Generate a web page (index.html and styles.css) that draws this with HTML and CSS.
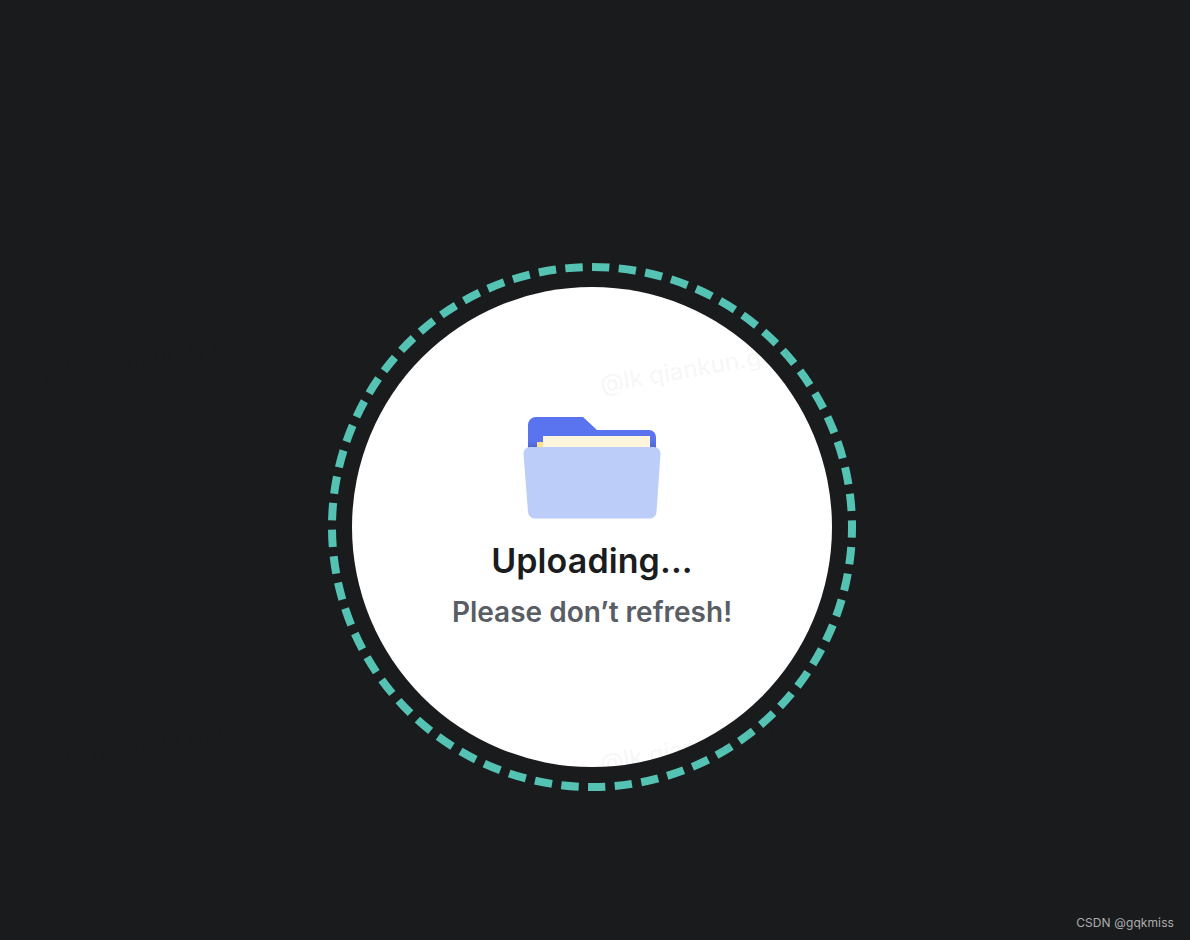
FILE: index.html
```html
<!DOCTYPE html>
<html lang="en">
<head>
<meta charset="utf-8">
<title>Uploading</title>
<link rel="stylesheet" href="styles.css">
</head>
<body>
<main class="stage">
  <div class="loader">
    <svg class="ring" viewBox="0 0 528 528" aria-hidden="true">
      <circle class="ring-track" cx="264" cy="264" r="260" pathLength="61"></circle>
    </svg>
    <div class="disc">
      <svg class="folder" viewBox="0 0 140 104" width="140" height="104" aria-hidden="true">
        <defs>
          <linearGradient id="backShade" x1="0" y1="0" x2="0" y2="1">
            <stop offset="0.72" stop-color="#5a74ef"></stop>
            <stop offset="1" stop-color="#4a5fc4"></stop>
          </linearGradient>
        </defs>
        <path fill="url(#backShade)" d="M6 9a8 8 0 0 1 8-8h47l14 13h52a7 7 0 0 1 7 7v13H6z"></path>
        <rect x="15" y="26" width="20" height="12" fill="#fbe28f"></rect>
        <rect x="21" y="20" width="107" height="14" fill="#fdf6dc"></rect>
        <path fill="#bccdfa" d="M8 31h124a6.500 6.500 0 0 1 6.500 7l-4 58a7 7 0 0 1-7 6.500H13a7 7 0 0 1-7-6.500L1.500 38A6.500 6.500 0 0 1 8 31z"></path>
      </svg>
      <h1 class="title">Uploading...</h1>
      <p class="subtitle">Please don’t refresh!</p>
    </div>
  </div>
  <div class="marks" aria-hidden="true">
    <span class="mark mark-a">@lk qiankun.guo</span>
    <span class="mark mark-b">@lk qiankun.guo</span>
    <span class="mark mark-c">@lk qiankun.guo</span>
    <span class="mark mark-d">@lk qiankun.guo</span>
  </div>
  <span class="credit">CSDN @gqkmiss</span>
</main>
</body>
</html>
```

FILE: styles.css
```css
* { box-sizing: border-box; }
html, body { margin: 0; height: 100%; }
body { background: #191b1d; overflow: hidden; font-family: Inter, "Liberation Sans", sans-serif; }
.stage { position: relative; width: 1190px; height: 940px; padding: 263px 0 0 328px; overflow: hidden; }
.loader { position: relative; width: 528px; height: 528px; padding: 24px; }
.ring { position: absolute; inset: 0; width: 528px; height: 528px; transform: rotate(-90deg); }
.ring-track { fill: none; stroke: #55c3b3; stroke-width: 8; stroke-dasharray: 0.65 0.35; }
.disc { width: 480px; height: 480px; border-radius: 50%; background: #fff; display: flex; flex-direction: column; align-items: center; padding-top: 129px; }
.folder { display: block; flex: none; }
.title { margin: 19px 0 0; font-size: 34px; line-height: 44px; font-weight: 600; color: #1a1c1e; letter-spacing: 0.1px; }
.subtitle { margin: 10px 0 0; font-size: 28px; line-height: 38px; font-weight: 600; color: #595d65; }
.marks { position: absolute; inset: 0; pointer-events: none; }
.mark { position: absolute; font-family: Inter, sans-serif; font-size: 24px; font-weight: 500; line-height: 30px; color: rgba(0, 0, 0, 0.055); white-space: nowrap; transform: rotate(-10deg); transform-origin: left bottom; }
.mark-a { left: 45px; top: 360px; }
.mark-b { left: 603px; top: 370px; }
.mark-c { left: 45px; top: 749px; }
.mark-d { left: 603px; top: 749px; }
.credit { position: absolute; right: 16px; bottom: 9px; font-family: Inter, sans-serif; font-size: 12px; line-height: 16px; color: #aeaeae; letter-spacing: 0.1px; }
```
